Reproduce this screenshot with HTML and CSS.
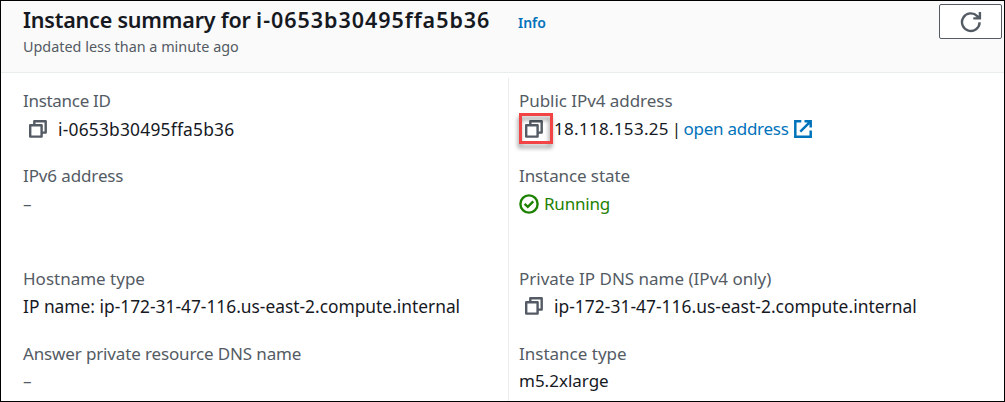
FILE: index.html
```
<!DOCTYPE html>
<html lang="en">
<head>
<meta charset="utf-8">
<title>Instance summary</title>
<link rel="stylesheet" href="styles.css">
</head>
<body>
<svg class="defs" width="0" height="0" aria-hidden="true">
  <symbol id="copy" viewBox="0 0 18 18"><path d="M1.2 5.2h11.4v11.4H1.2zM5.3 5V1.2h11.4v11.4H13" fill="none" stroke="currentColor" stroke-width="2.4" stroke-linejoin="round"/></symbol>
</svg>
<main class="panel">
  <header class="header">
    <div class="heading">
      <div class="title-row"><h1 class="title">Instance summary for <span class="title-id">i-0653b30495ffa5b36</span></h1><a class="info">Info</a></div>
      <p class="updated">Updated less than a minute ago</p>
    </div>
    <button class="refresh" aria-label="Refresh"><svg class="refresh-icon" width="22" height="22" viewBox="0 0 22 22"><path d="M19.6 11.2A8.8 8.8 0 1 1 17.2 5.1L18.6 6.6M19.9 1v6.4h-6.6" fill="none" stroke="currentColor" stroke-width="2.4"/></svg></button>
  </header>
  <div class="columns">
    <dl class="column left">
      <div class="group"><dt class="label instance-id">Instance ID</dt><dd class="value id"><svg class="copy"><use href="#copy"/></svg>i-0653b30495ffa5b36</dd></div>
      <div class="group tall"><dt class="label ipv6">IPv6 address</dt><dd class="value empty">–</dd></div>
      <div class="group low"><dt class="label">Hostname type</dt><dd class="value hostname">IP name: ip-172-31-47-116.us-east-2.compute.internal</dd></div>
      <div class="group low"><dt class="label answer">Answer private resource DNS name</dt><dd class="value empty">–</dd></div>
    </dl>
    <dl class="column right">
      <div class="group"><dt class="label public">Public IPv4 address</dt><dd class="value address"><span class="copy-wrap"><svg class="copy"><use href="#copy"/></svg><span class="highlight"></span></span><span>18.118.153.25</span><span class="pipe">|</span><a class="link">open address<svg class="external" width="18" height="18" viewBox="0 0 18 18"><path d="M7.3 1.3H1.3v15.4h15.4v-6.1M10.5 1.3h6.2v6.2M16.3 1.7L6.3 11.7" fill="none" stroke="currentColor" stroke-width="2.5"/></svg></a></dd></div>
      <div class="group tall"><dt class="label state">Instance state</dt><dd class="value running"><svg class="check" width="20" height="20" viewBox="0 0 20 20"><g fill="none" stroke="currentColor" stroke-width="2.4"><circle cx="10" cy="10" r="8.6"/><path d="M5.6 9.8l3.2 3 5.5-5.5"/></g></svg>Running</dd></div>
      <div class="group low"><dt class="label">Private IP DNS name (IPv4 only)</dt><dd class="value private"><svg class="copy"><use href="#copy"/></svg>ip-172-31-47-116.us-east-2.compute.internal</dd></div>
      <div class="group low"><dt class="label">Instance type</dt><dd class="value">m5.2xlarge</dd></div>
    </dl>
  </div>
</main>
</body>
</html>
```
FILE: styles.css
```
* { box-sizing: border-box; }
body { margin: 0; font: 17px/26px "Noto Sans", sans-serif; color: #16191f; background: #fff; }
svg { flex: none; }
.defs { position: absolute; }
h1, p, dl, dd { margin: 0; }
.panel { width: 1005px; height: 402px; border: 1px solid #000; overflow: hidden; }
.header { display: flex; justify-content: space-between; height: 72px; background: #fafafa; border-bottom: 1px solid #eaeded; padding: 3px 2px 0 22px; }
.title-row { display: flex; }
.title { width: 467px; height: 32px; font-size: 21.5px; line-height: 32px; font-weight: 600; letter-spacing: -.2px; white-space: nowrap; }
.title-id { letter-spacing: .96px; }
.info { margin-left: 28px; font-size: 14px; font-weight: 600; line-height: 38px; height: 32px; color: #0073bb; }
.updated { font-size: 14.4px; line-height: 22px; color: #545b64; }
.refresh { width: 63px; height: 35px; border: 1px solid #545b64; border-radius: 2px; background: #fff; color: #545b64; padding: 0; }
.refresh-icon { display: block; margin: 1px auto 0 20px; }
.columns { display: grid; grid-template-columns: 485px 1fr; padding: 5px 0 0 22px; height: 328px; }
.column { padding-top: 10px; }
.right { border-left: 1px solid #eaeded; padding-left: 10px; }
.group { height: 75px; }
.tall { height: 103px; }
.label { color: #545b64; white-space: nowrap; }
.value { display: flex; align-items: center; margin-top: 2px; white-space: nowrap; }
.low .value { margin-top: 1px; }
.empty { color: #545b64; }
.copy { display: block; width: 18px; height: 18px; margin: 0 11px 0 6px; color: #545b64; }
.copy-wrap { position: relative; }
.highlight { position: absolute; left: 0; top: -7px; width: 34px; height: 31px; border: 3px solid #f24444; filter: drop-shadow(-1px 4px 2px rgba(0, 0, 0, .4)); }
.pipe { margin: 0 3px 0 3px; }
.link { display: flex; align-items: center; margin-left: -1px; color: #0073bb; letter-spacing: -.26px; }
.external { margin-left: 5px; }
.running { color: #1d8102; letter-spacing: -.2px; }
.check { margin-right: 5px; }
.instance-id { letter-spacing: -.3px; }
.id { font-size: 17.4px; letter-spacing: .2px; }
.ipv6 { letter-spacing: -.12px; }
.hostname { font-size: 17.35px; letter-spacing: 0; }
.answer { letter-spacing: -.14px; }
.public { letter-spacing: -.05px; }
.address { letter-spacing: .3px; }
.state { letter-spacing: -.1px; }
.private { font-size: 17.4px; letter-spacing: .03px; }
```
